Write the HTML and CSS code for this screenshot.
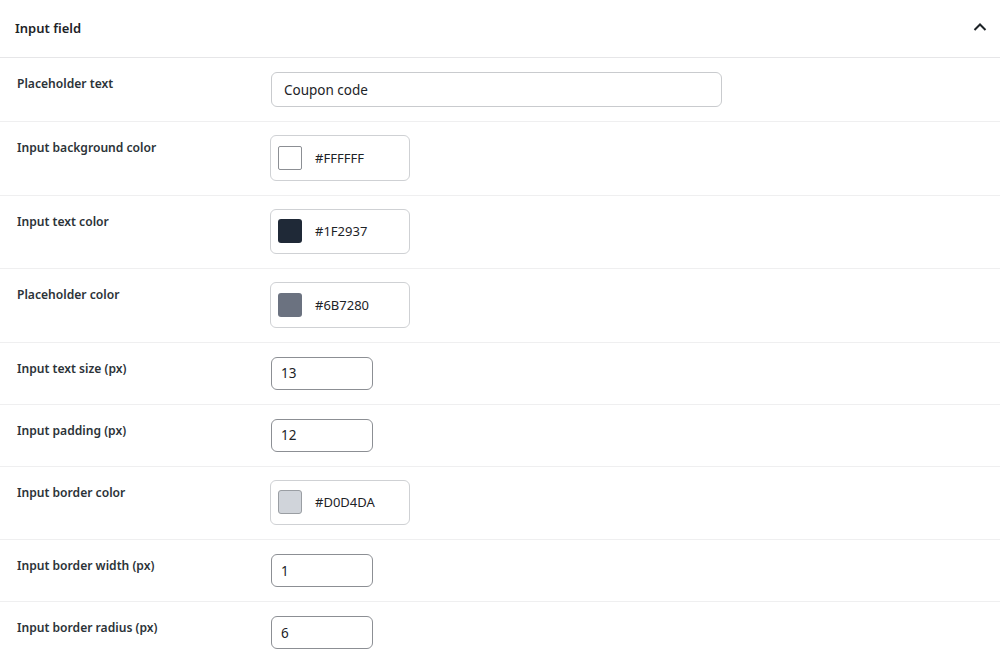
FILE: index.html
```html
<!DOCTYPE html>
<html>
<head>
<meta charset="utf-8">
<link rel="stylesheet" href="styles.css">
</head>
<body>
<div class="panel">
  <div class="panel-head">
    <span class="panel-title">Input field</span>
    <svg class="chev" width="14" height="10" viewBox="0 0 14 10"><path d="M1.5 8 L7 2.5 L12.5 8" fill="none" stroke="#1d2327" stroke-width="2"/></svg>
  </div>
  <div class="row">
    <div class="label">Placeholder text</div>
    <div class="control"><div class="text-input wide">Coupon code</div></div>
  </div>
  <div class="row">
    <div class="label">Input background color</div>
    <div class="control"><div class="color-input"><span class="swatch sw-white"></span><span class="hex">#FFFFFF</span></div></div>
  </div>
  <div class="row">
    <div class="label">Input text color</div>
    <div class="control"><div class="color-input"><span class="swatch sw-dark"></span><span class="hex">#1F2937</span></div></div>
  </div>
  <div class="row">
    <div class="label">Placeholder color</div>
    <div class="control"><div class="color-input"><span class="swatch sw-grey"></span><span class="hex">#6B7280</span></div></div>
  </div>
  <div class="row">
    <div class="label">Input text size (px)</div>
    <div class="control"><div class="num-input">13</div></div>
  </div>
  <div class="row">
    <div class="label">Input padding (px)</div>
    <div class="control"><div class="num-input">12</div></div>
  </div>
  <div class="row">
    <div class="label">Input border color</div>
    <div class="control"><div class="color-input"><span class="swatch sw-light"></span><span class="hex">#D0D4DA</span></div></div>
  </div>
  <div class="row">
    <div class="label">Input border width (px)</div>
    <div class="control"><div class="num-input">1</div></div>
  </div>
  <div class="row">
    <div class="label">Input border radius (px)</div>
    <div class="control"><div class="num-input">6</div></div>
  </div>
</div>
</body>
</html>
```
FILE: styles.css
```css
* { box-sizing: border-box; }
body {
  margin: 0;
  background: #fff;
  font-family: "Noto Sans", "Open Sans", sans-serif;
  color: #1d2327;
}
.panel { width: 1000px; }
.panel-head {
  height: 58px;
  display: flex;
  align-items: center;
  justify-content: space-between;
  padding: 0 13px 0 15px;
  border-bottom: 1px solid #e6e6e8;
}
.panel-title {
  font-size: 13px;
  font-weight: 600;
  color: #1d2327;
  margin-top: -2px;
}
.chev { display: block; margin-top: -4px; }
.row {
  display: grid;
  grid-template-columns: 254px 1fr;
  padding: 14px 0 14px 17px;
  border-bottom: 1px solid #efeff0;
}
.label {
  font-size: 12.1px;
  font-weight: 600;
  color: #2c3338;
  padding-top: 3px;
  line-height: 18px;
}
.text-input {
  height: 35px;
  border: 1px solid #c9cbce;
  border-radius: 6px;
  font-size: 13.5px;
  color: #1d2327;
  display: flex;
  align-items: center;
  padding: 0 12px;
}
.wide { width: 451px; }
.num-input {
  width: 102px;
  height: 33px;
  border: 1px solid #8c8f94;
  border-radius: 6px;
  font-size: 13.5px;
  color: #1d2327;
  display: flex;
  align-items: center;
  padding: 0 8px 0 9px;
}
.color-input {
  width: 140px;
  height: 45.5px;
  margin-left: -1px;
  margin-top: -1px;
  border: 1px solid #cfd1d4;
  border-radius: 6px;
  display: flex;
  align-items: center;
  padding: 0 0 0 7px;
}
.swatch {
  width: 24px;
  height: 24px;
  border-radius: 3px;
  flex: none;
}
.sw-white { background: #fff; border: 1px solid #8c8f94; border-radius: 2px; }
.sw-dark { background: #1f2937; }
.sw-grey { background: #6b7280; }
.sw-light { background: #d0d4da; border: 1px solid #9a9ea3; }
.hex {
  margin-left: 13px;
  font-size: 13px;
  color: #1d2327;
}
```
